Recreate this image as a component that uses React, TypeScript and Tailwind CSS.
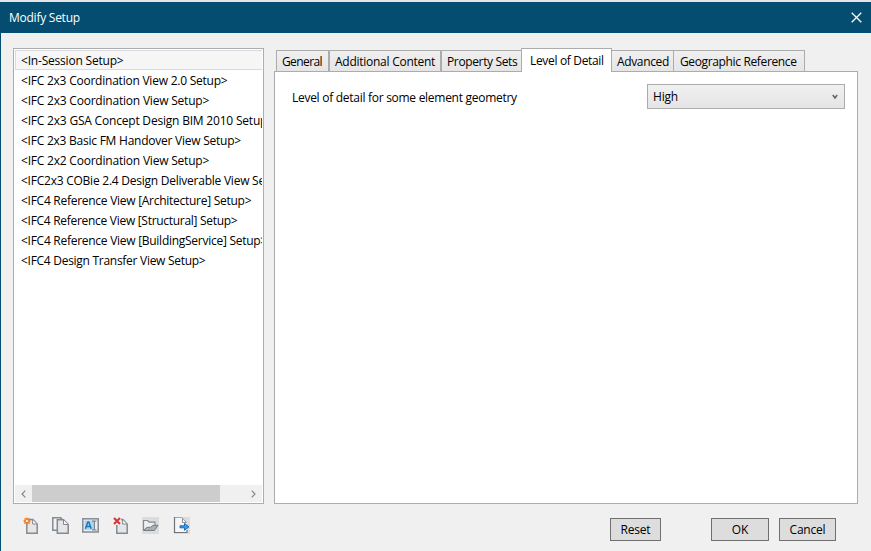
import React from "react";

const setups = [
  { name: "<In-Session Setup>", track: "tracking-[-0.2px]" },
  { name: "<IFC 2x3 Coordination View 2.0 Setup>", track: "tracking-[-0.23px]" },
  { name: "<IFC 2x3 Coordination View Setup>", track: "tracking-[-0.21px]" },
  { name: "<IFC 2x3 GSA Concept Design BIM 2010 Setup>", track: "tracking-[-0.2px]" },
  { name: "<IFC 2x3 Basic FM Handover View Setup>", track: "tracking-[-0.24px]" },
  { name: "<IFC 2x2 Coordination View Setup>", track: "tracking-[-0.21px]" },
  { name: "<IFC2x3 COBie 2.4 Design Deliverable View Setup>", track: "tracking-[-0.24px]" },
  { name: "<IFC4 Reference View [Architecture] Setup>", track: "tracking-[-0.27px]" },
  { name: "<IFC4 Reference View [Structural] Setup>", track: "tracking-[-0.29px]" },
  { name: "<IFC4 Reference View [BuildingService] Setup>", track: "tracking-[-0.27px]" },
  { name: "<IFC4 Design Transfer View Setup>", track: "tracking-[-0.28px]" },
];

const tabs = [
  { name: "General", box: "w-[53px] pl-[5px]", track: "tracking-[-0.6px]" },
  { name: "Additional Content", box: "w-[112px] pl-[5px]", track: "tracking-[-0.26px]" },
  { name: "Property Sets", box: "w-[81px] pl-[5px]", track: "tracking-[-0.36px]" },
  { name: "Level of Detail", box: "-ml-px w-[91px] pl-[8px]", track: "tracking-[-0.33px]", active: true },
  { name: "Advanced", box: "-ml-px w-[63px] pl-[5px]", track: "tracking-[-0.35px]" },
  { name: "Geographic Reference", box: "-ml-px w-[132px] pl-[6px]", track: "tracking-[-0.36px]" },
];

function Page() {
  return (
    <>
      <path d="M3.8 4v12.2h10.4V7L9.8 2.6H6" fill="#e4e6e9" stroke="#858a91" strokeWidth="1.5" />
      <path d="M9.6 2.8V7H14" fill="#fafafa" stroke="#858a91" />
    </>
  );
}

function NewIcon() {
  return (
    <svg width="16" height="17" viewBox="0 0 16 17">
      <Page />
      <circle cx="4" cy="4" r="2.1" fill="#ffe8c8" stroke="#ef7d22" strokeWidth="1.7" />
      <path d="M4 .3v1.2M4 6.5v1.2M.3 4h1.2M6.5 4h1.2M1.4 1.4l1 1M5.8 5.8l1 1M6.6 1.4l-1 1M2.2 5.8l-1 1" stroke="#ef7d22" />
    </svg>
  );
}

function DuplicateIcon() {
  return (
    <svg width="17" height="17" viewBox="0 0 17 17">
      <path d="M5 13.3H.8V.8h8L10.5 3" fill="#f2f2f3" stroke="#858a91" strokeWidth="1.5" />
      <path d="M5.3 2.8h6.2l4.7 4.7v8.7H5.3z" fill="#e4e6e9" stroke="#858a91" strokeWidth="1.5" />
      <path d="M11.5 3v4.5H16" fill="#fafafa" stroke="#858a91" />
    </svg>
  );
}

function RenameIcon() {
  return (
    <svg width="17" height="15" viewBox="0 0 17 15">
      <rect x=".8" y=".8" width="15.4" height="13.2" fill="#edf0f2" stroke="#858a91" strokeWidth="1.5" />
      <rect x="2.5" y="2.5" width="9" height="9.5" fill="#a9d5f2" />
      <path d="M3.4 10.8L5.9 4h.9l2.4 6.8M4.6 8.6h3.5" fill="none" stroke="#2276b8" strokeWidth="1.5" />
      <path d="M10 3h1.5l.8.5.8-.5h1.4M12.3 3.5v8M10 12h1.5l.8-.5.8.5h1.4" fill="none" stroke="#6c747c" strokeWidth="1.1" />
    </svg>
  );
}

function DeleteIcon() {
  return (
    <svg width="16" height="17" viewBox="0 0 16 17">
      <Page />
      <path d="M0 0h8v8H0z" fill="#f0f0f0" />
      <path d="M1 1l6 6M7 1L1 7" stroke="#d43b38" strokeWidth="2.2" />
    </svg>
  );
}

function OpenIcon() {
  return (
    <svg width="17" height="17" viewBox="0 0 17 17">
      <path d="M0 0h17v17H0z" fill="#dcdcdc" />
      <path d="M1.5 13.5V3.5h4.2l1.4 1.7h5.9V9" fill="#eceeef" stroke="#858a91" strokeWidth="1.2" />
      <path d="M1.5 13.5l3-3 4.2-.3L11 8.3h5l-3.6 5.2z" fill="#a9aeb3" stroke="#777d83" />
    </svg>
  );
}

function ExportIcon() {
  return (
    <svg width="17" height="17" viewBox="0 0 17 17">
      <path d="M1 0h16v17H1z" fill="#dcdcdc" />
      <path d="M1.5.5h8l4.5 4.8v10.2H1.5z" fill="#f4f6f8" />
      <path d="M1.5.5h8" stroke="#a4a8ad" />
      <path d="M1.5 0v15.5H14V13" fill="none" stroke="#6d737a" strokeWidth="1.2" />
      <path d="M9.5 1.2v4.3h4z" fill="#ffffff" stroke="#8d9298" />
      <path d="M7 8.8h4.5V6.4L16 9.8l-4.5 3.4v-2.4H7z" fill="#3c9cec" stroke="#1261ac" strokeWidth=".9" />
    </svg>
  );
}

export default function App() {
  return (
    <div className="flex h-[551px] w-[871px] flex-col overflow-hidden whitespace-nowrap bg-[#f0f0f0] font-['Open_Sans','Noto_Sans',sans-serif] text-[12px] leading-[20px] text-black">
      <div className="h-[2px] shrink-0 bg-[#e3e5e6]" />
      <header className="flex h-[31px] shrink-0 items-center justify-between bg-[#054d70] pl-[9px] pr-[9px] text-white">
        <span className="pt-px tracking-[-0.25px]">Modify Setup</span>
        <svg width="11" height="11" viewBox="0 0 11 11" className="mb-px">
          <path d="M.7.7l9.6 9.6M10.3.7L.7 10.3" stroke="white" strokeWidth="1.3" />
        </svg>
      </header>
      <main className="flex flex-1 border-l border-[#054d70] pl-[12px]">
        <section className="w-[251px] shrink-0 pt-[15px]">
          <div className="flex h-[456px] flex-col border border-[#abadb3] bg-white p-px">
            <ul className="flex-1 overflow-hidden">
              {setups.map((s, i) => (
                <li
                  key={s.name}
                  className={
                    i === 0
                      ? "h-[20px] border border-r-0 border-[#dadada] bg-[#f6f6f6] pl-[5px] leading-[19px]"
                      : "h-[20px] pl-[6px] leading-[21px]"
                  }
                >
                  <span className={s.track}>{s.name}</span>
                </li>
              ))}
            </ul>
            <div className="flex h-[17px] bg-[#f0f0f0]">
              <div className="flex w-[17px] items-center justify-center">
                <svg width="5" height="8" viewBox="0 0 5 8">
                  <path d="M4.3.7L1 4l3.3 3.3" fill="none" stroke="#858585" strokeWidth="1.2" />
                </svg>
              </div>
              <div className="w-[188px] bg-[#cdcdcd]" />
              <div className="flex flex-1 items-center justify-end pr-[6px]">
                <svg width="5" height="8" viewBox="0 0 5 8">
                  <path d="M.7.7L4 4 .7 7.3" fill="none" stroke="#858585" strokeWidth="1.2" />
                </svg>
              </div>
            </div>
          </div>
          <div className="flex h-[43px] items-center pl-[10px]">
            <span className="w-[29px]"><NewIcon /></span>
            <span className="w-[30px]"><DuplicateIcon /></span>
            <span className="w-[31px]"><RenameIcon /></span>
            <span className="w-[29px]"><DeleteIcon /></span>
            <span className="w-[31px]"><OpenIcon /></span>
            <span><ExportIcon /></span>
          </div>
        </section>
        <section className="ml-[10px] w-[584px] pt-[15px]">
          <nav className="relative z-10 -mb-px flex h-[24px] items-end pl-[2px]">
            {tabs.map((t) => (
              <div
                key={t.name}
                className={`shrink-0 border border-[#acacac] ${t.box} ${
                  t.active
                    ? "h-[24px] border-b-0 bg-white leading-[23px]"
                    : "h-[22px] bg-gradient-to-b from-[#f0f0f0] to-[#e5e5e5] leading-[21px]"
                }`}
              >
                <span className={t.track}>{t.name}</span>
              </div>
            ))}
          </nav>
          <div className="flex h-[433px] items-start justify-between border border-[#acacac] bg-white pl-[17px] pr-[12px] pt-[12px]">
            <span className="pt-[4px] tracking-[-0.28px]">Level of detail for some element geometry</span>
            <div className="flex h-[25px] w-[198px] items-center justify-between border border-[#acacac] bg-gradient-to-b from-[#f0f0f0] to-[#e5e5e5] pl-[5px] pr-[6px]">
              <span className="tracking-[-0.2px]">High</span>
              <svg width="6" height="6" viewBox="0 0 6 6">
                <path d="M.8 1L3 4 5.2 1" fill="none" stroke="#606060" strokeWidth="1.5" />
              </svg>
            </div>
          </div>
          <footer className="flex pl-[336px] pt-[14px] leading-[21px]">
            <button className="h-[23px] w-[51px] border border-[#707070] bg-[#dddddd] tracking-[-0.2px]">Reset</button>
            <button className="ml-[50px] h-[23px] w-[58px] border border-[#707070] bg-[#dddddd] tracking-[-0.2px]">OK</button>
            <button className="ml-[10px] h-[23px] w-[57px] border border-[#707070] bg-[#dddddd] tracking-[-0.2px]">Cancel</button>
          </footer>
        </section>
      </main>
    </div>
  );
}
